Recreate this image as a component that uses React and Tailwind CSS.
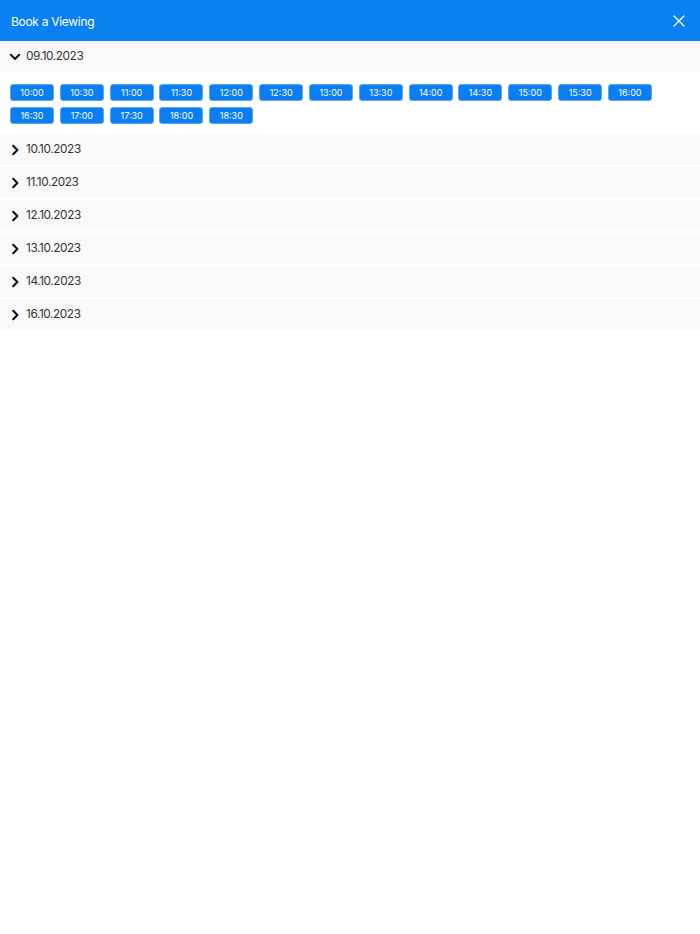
import React from "react";

const times1 = ["10:00","10:30","11:00","11:30","12:00","12:30","13:00","13:30","14:00","14:30","15:00","15:30","16:00"];
const times2 = ["16:30","17:00","17:30","18:00","18:30"];
const dates = ["10.10.2023","11.10.2023","12.10.2023","13.10.2023","14.10.2023","16.10.2023"];

function ChevronDown() {
  return (
    <svg width="12" height="12" viewBox="0 0 12 12" fill="none" stroke="#111" strokeWidth="2" strokeLinecap="round" strokeLinejoin="round">
      <path d="M1.8 3.8 L6 8 L10.2 3.8" />
    </svg>
  );
}
function ChevronRight() {
  return (
    <svg width="12" height="12" viewBox="0 0 12 12" fill="none" stroke="#111" strokeWidth="2.1" strokeLinecap="round" strokeLinejoin="round">
      <path d="M4.2 1.8 L8.4 6 L4.2 10.2" />
    </svg>
  );
}

function Btn({ t }) {
  return (
    <button className="w-[44px] h-[17px] rounded-[3px] bg-[#0b7ef2] border border-[#5aa6f6] text-white text-[9px] leading-none flex items-center justify-center">
      {t}
    </button>
  );
}

export default function App() {
  return (
    <div className="w-[700px] h-[934px] bg-white" style={{ fontFamily: "Inter, 'Noto Sans', sans-serif" }}>
      <div className="h-[41px] bg-[#0b80f3] flex items-center justify-between pl-[11px] pr-[15px]">
        <span className="text-white text-[12px] tracking-[-0.3px] pt-[2px]">Book a Viewing</span>
        <svg width="12" height="12" viewBox="0 0 12 12" stroke="white" strokeWidth="1.3" strokeLinecap="round">
          <path d="M1 1 L11 11 M11 1 L1 11" />
        </svg>
      </div>
      <div className="h-[31px] bg-[#f9f9f9] flex items-center pl-[9px] gap-[5px]">
        <ChevronDown />
        <span className="text-[11.8px] tracking-[-0.4px] text-[#333] pt-[1px]">09.10.2023</span>
      </div>
      <div className="pt-[12px] pb-[10px] pl-[10px] flex flex-col gap-[6px]">
        <div className="flex gap-[5.83px]">
          {times1.map((t) => <Btn key={t} t={t} />)}
        </div>
        <div className="flex gap-[5.83px]">
          {times2.map((t) => <Btn key={t} t={t} />)}
        </div>
      </div>
      <div className="flex flex-col gap-[2px]">
        {dates.map((d) => (
          <div key={d} className="h-[31px] bg-[#f9f9f9] flex items-center pl-[9px] gap-[5px]">
            <ChevronRight />
            <span className="text-[11.8px] tracking-[-0.4px] text-[#333] pt-[1px]">{d}</span>
          </div>
        ))}
      </div>
    </div>
  );
}
